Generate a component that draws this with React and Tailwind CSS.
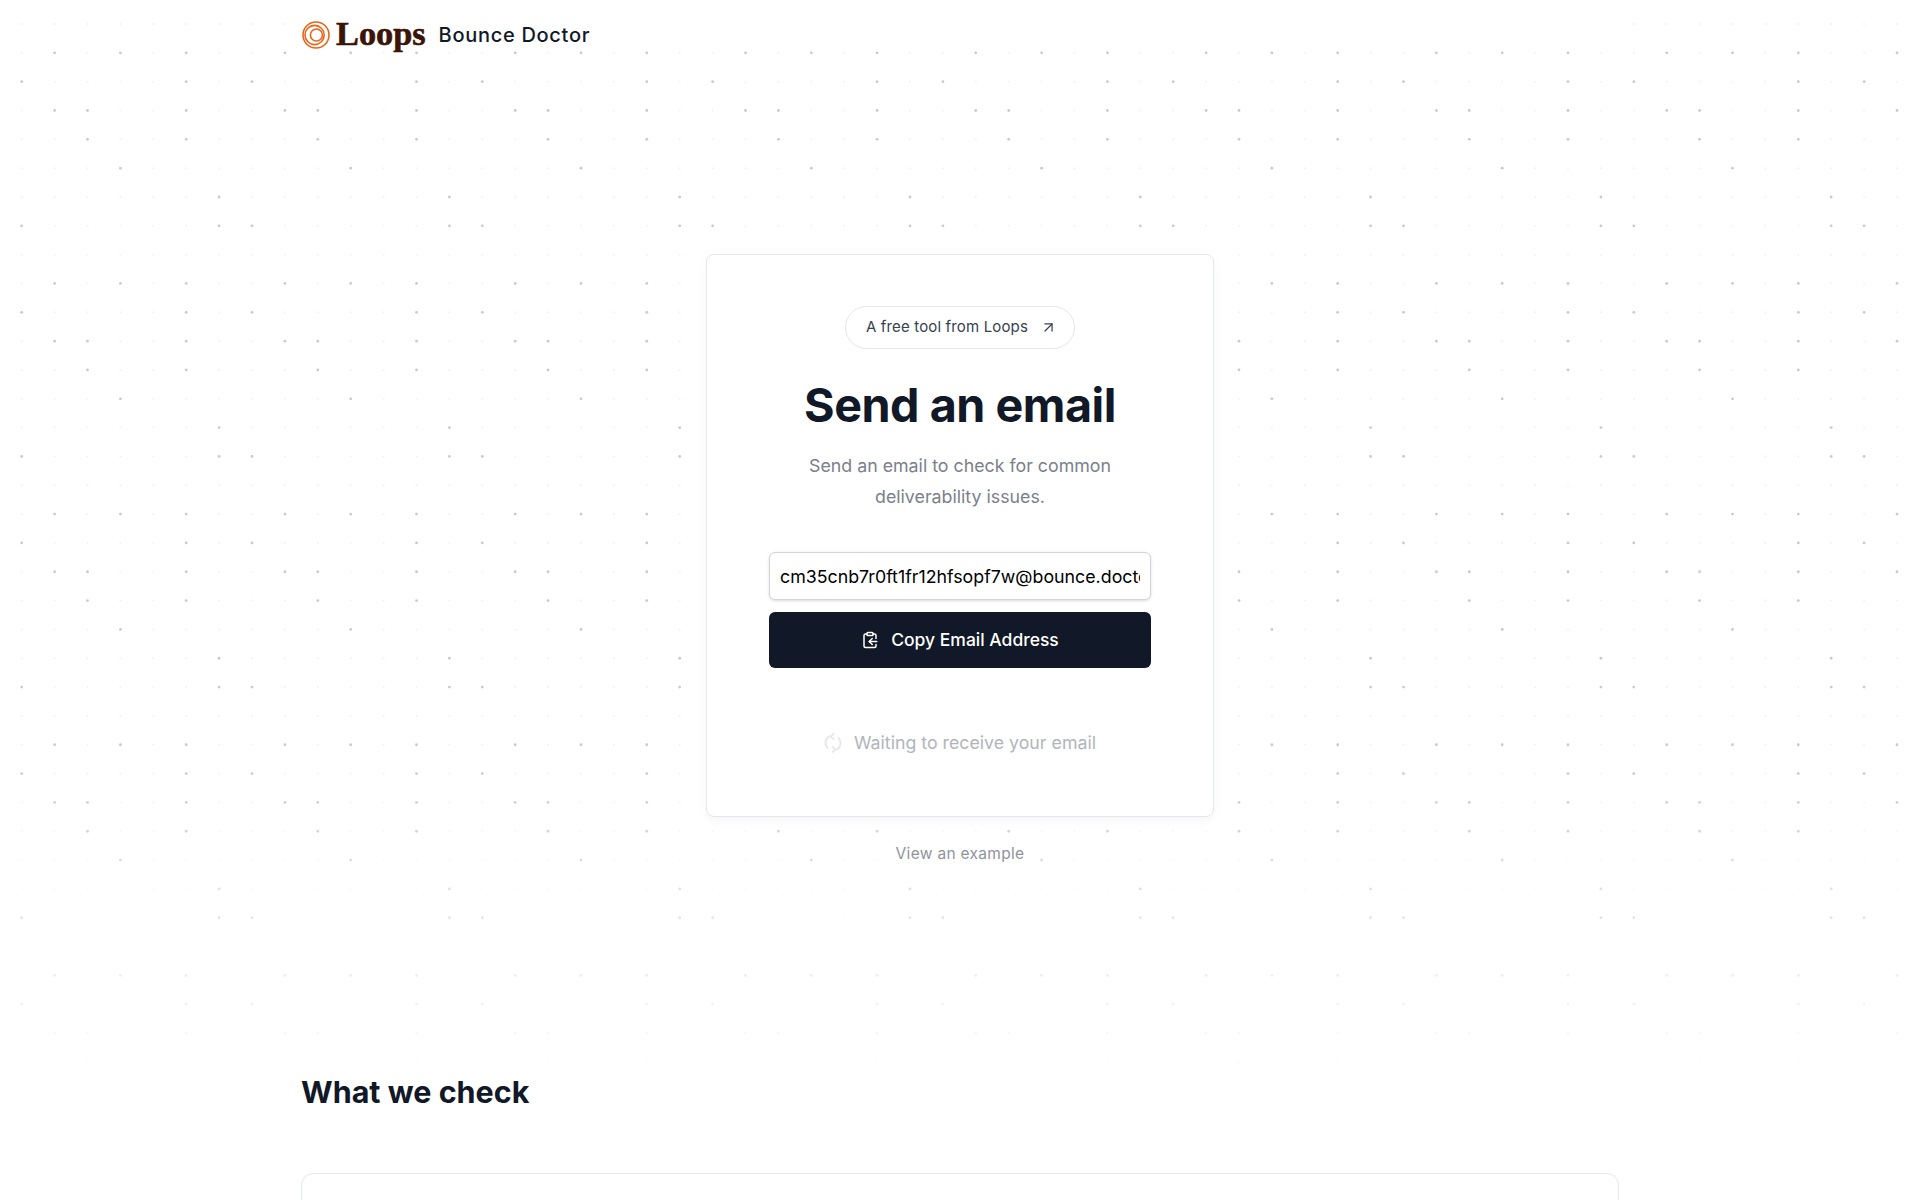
import React from "react";
import { ArrowUpRight, ClipboardCopy } from "lucide-react";

const DARK = [[], [1, 3, 5], [0, 5], [1, 2, 5], [2, 5], [3], [6], [0, 6]];

function dots() {
  const out = [];
  for (let j = 0; j < 38; j++) {
    for (let i = 0; i < 59; i++) {
      const dark = DARK[j % 8].includes(i % 7);
      const y = 24 + j * 28.83;
      const fade = y > 760 ? Math.max(0, 1 - (y - 760) / 320) : 1;
      out.push(
        <circle key={i + "-" + j} cx={21.7 + i * 32.9} cy={y} r={dark ? 1.4 : 1} fill="#a3a7ad" opacity={(dark ? 0.6 : 0.16) * fade * (dark ? 1 : fade)} />
      );
    }
  }
  return out;
}

function LoopsMark() {
  return (
    <svg width="30" height="28" viewBox="0 0 30 28" fill="none" stroke="#e8651a" strokeWidth="1.6">
      <circle cx="15" cy="14" r="13" />
      <circle cx="13.6" cy="14" r="9.6" />
      <circle cx="15.4" cy="14" r="6" />
    </svg>
  );
}

function SpinIcon() {
  return (
    <svg width="18" height="22" viewBox="0 0 18 22" fill="none" stroke="#e5e7eb" strokeWidth="1.8" strokeLinecap="round" strokeLinejoin="round">
      <path d="M5 4.5A7.5 7.5 0 0 0 3.5 16" />
      <path d="M13 17.5A7.5 7.5 0 0 0 14.5 6" />
      <path d="M9.5 2l-3 2.5 3 2.5" />
      <path d="M8.5 15l3 2.5-3 2.5" />
    </svg>
  );
}

export default function App() {
  return (
    <div className="relative h-[1200px] overflow-hidden bg-white font-['Inter',sans-serif] text-[#111827]">
      <svg className="absolute inset-0" width="1920" height="1200" aria-hidden="true">
        {dots()}
      </svg>
      <div className="relative mx-auto flex w-[1318px] flex-col">
        <header className="flex h-[46px] items-center gap-[13px] bg-white pt-[23px]">
          <div className="flex items-center gap-[5px]">
            <LoopsMark />
            <span className="mb-[2px] font-['Liberation_Serif',serif] text-[34.3px] font-bold leading-none text-[#3a1406] [-webkit-text-stroke:0.6px_#3a1406]">Loops</span>
          </div>
          <span className="text-[20px] font-medium tracking-[0.035em] text-[#111827]">Bounce Doctor</span>
        </header>

        <main className="mt-[208px] flex flex-col items-center">
          <div className="flex h-[563px] w-[508px] flex-col items-center rounded-lg border border-[#e6e7ea] bg-white px-[62px] pt-[51px] shadow-[0_4px_12px_rgba(0,0,0,0.04)]">
            <div className="flex h-[43px] items-center gap-3 rounded-full border border-[#e5e7eb] bg-white pl-[20px] pr-[17px] text-[15px] tracking-[0.01em] text-[#374151]">
              A free tool from Loops
              <ArrowUpRight size={17} strokeWidth={1.75} />
            </div>
            <h1 className="mt-[26px] text-[46.7px] font-bold leading-[60px] tracking-[-0.01em] text-[#111827]">Send an email</h1>
            <p className="mt-[15px] text-center text-[17.8px] leading-[31px] text-[#7b808a]">
              Send an email to check for common deliverability issues.
            </p>
            <input
              readOnly
              value="cm35cnb7r0ft1fr12hfsopf7w@bounce.doctor"
              className="mt-[40px] h-[48px] w-[382px] shrink-0 rounded-md border border-[#d1d5db] bg-white px-[10px] text-[17.8px] text-black shadow-[0_1px_3px_rgba(0,0,0,0.14)] outline-none"
            />
            <button className="mt-[12px] flex h-[56px] w-[382px] shrink-0 items-center justify-center gap-[12px] rounded-md bg-[#111827] text-[17.5px] font-medium text-white">
              <ClipboardCopy size={18} strokeWidth={2} />
              Copy Email Address
            </button>
            <div className="mt-[62px] flex items-center gap-[12px] text-[17.75px] text-[#b1b5bb]">
              <SpinIcon />
              Waiting to receive your email
            </div>
          </div>
          <a className="mt-[25px] text-[15.5px] tracking-[0.02em] text-[#8f949c]">View an example</a>
        </main>

        <h2 className="mt-[207px] text-[30.5px] font-bold leading-[40px] text-[#111827]">What we check</h2>
        <div className="mt-[61px] h-[400px] rounded-xl border border-[#e6e7ea] bg-white" />
      </div>
    </div>
  );
}
